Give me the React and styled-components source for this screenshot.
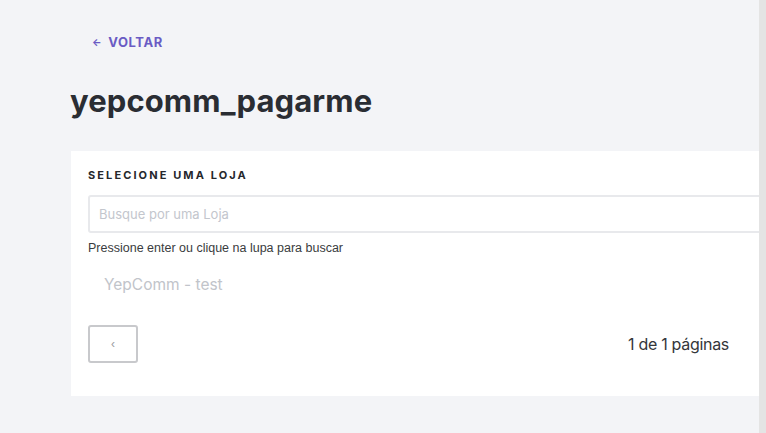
import React from "react";
import styled, { createGlobalStyle } from "styled-components";

const GlobalStyle = createGlobalStyle`
    html, body {
        margin: 0;
        padding: 0;
        background: #f3f4f7;
        font-family: Inter, "Open Sans", sans-serif;
    }
`;

function App() {
    return (
        <>
            <GlobalStyle />
            <Page>
                <Main>
                    <BackLink href="#">
                        <span className="arrow">←</span> VOLTAR
                    </BackLink>
                    <Title>yepcomm_pagarme</Title>
                    <Card>
                        <Label>SELECIONE UMA LOJA</Label>
                        <SearchInput placeholder="Busque por uma Loja" />
                        <Hint>Pressione enter ou clique na lupa para buscar</Hint>
                        <StoreItem>YepComm - test</StoreItem>
                        <Pager>
                            <PagerButton>‹</PagerButton>
                            <PageCount>1 de 1 páginas</PageCount>
                        </Pager>
                    </Card>
                </Main>
                <ScrollTrack />
            </Page>
        </>
    );
}

const Page = styled.div`
    display: flex;
    width: 766px;
    height: 433px;
    overflow: hidden;
`;

const Main = styled.div`
    flex: 1;
    min-width: 0;
    overflow: hidden;
    padding: 30px 0 0 70px;
    box-sizing: border-box;
`;

const ScrollTrack = styled.div`
    width: 7px;
    background: #e4e4e4;
`;

const BackLink = styled.a`
    display: inline-flex;
    align-items: center;
    gap: 6px;
    margin-left: 22px;
    font-size: 13px;
    font-weight: 700;
    letter-spacing: 0.6px;
    color: #6a5bc4;
    text-decoration: none;
    line-height: 18px;
    .arrow {
        font-size: 10px;
    }
`;

const Title = styled.h1`
    margin: 30px 0 0;
    font-size: 31px;
    font-weight: 700;
    letter-spacing: 0.1px;
    color: #2a2d33;
    line-height: 40px;
`;

const Card = styled.div`
    margin-top: 30px;
    margin-left: 1px;
    width: 720px;
    height: 245px;
    box-sizing: border-box;
    background: #fff;
    padding: 17px 17px;
    display: flex;
    flex-direction: column;
`;

const Label = styled.div`
    font-size: 11px;
    font-weight: 700;
    letter-spacing: 2.1px;
    color: #25272c;
    line-height: 14px;
`;

const SearchInput = styled.input`
    margin-top: 13px;
    height: 38px;
    box-sizing: border-box;
    border: 2px solid #e8e9ec;
    border-radius: 3px;
    padding: 0 9px;
    font-family: inherit;
    font-size: 13px;
    outline: none;
    &::placeholder {
        color: #c3c6cd;
    }
`;

const Hint = styled.div`
    margin-top: 8px;
    font-family: "Liberation Sans", Arial, sans-serif;
    font-size: 12.5px;
    color: #3a3c40;
    line-height: 14px;
`;

const StoreItem = styled.div`
    margin-top: 20px;
    padding-left: 16px;
    font-size: 15.5px;
    color: #c1c4ca;
    line-height: 20px;
`;

const Pager = styled.div`
    margin-top: 30px;
    margin-right: 45px;
    display: flex;
    align-items: center;
    justify-content: space-between;
`;

const PagerButton = styled.button`
    width: 50px;
    height: 38px;
    background: #fff;
    border: 2px solid #c8c9cc;
    border-radius: 3px;
    color: #9a9ca0;
    font-size: 12px;
    cursor: pointer;
`;

const PageCount = styled.span`
    font-size: 16px;
    color: #34363a;
    letter-spacing: -0.3px;
`;

export default App;
